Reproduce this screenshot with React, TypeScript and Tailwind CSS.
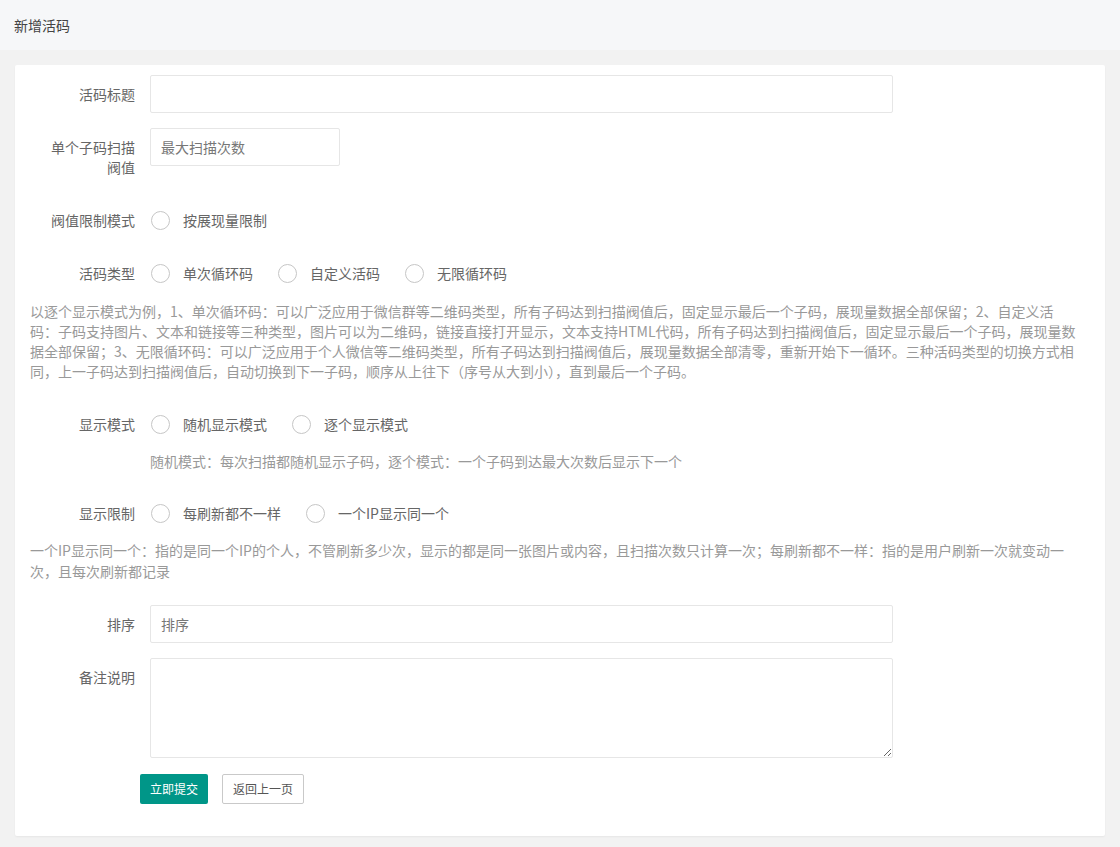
import type { ReactNode } from 'react'

const font = { fontFamily: '"Noto Sans CJK SC", "Noto Sans", sans-serif' }

function Label({ children }: { children: ReactNode }) {
  return (
    <label className="block w-[120px] shrink-0 px-[15px] py-[9px] text-right text-[14px] leading-[20px] text-[#666]">
      {children}
    </label>
  )
}

function Radio({ label }: { label: string }) {
  return (
    <div className="mr-[25px] flex items-center">
      <span className="h-[19px] w-[19px] rounded-full border-[1.5px] border-[#c6c6c6] bg-white" />
      <span className="ml-[13px] text-[14px] leading-[20px] text-[#666]">{label}</span>
    </div>
  )
}

function RadioRow({ label, options }: { label: string; options: string[] }) {
  return (
    <div className="flex">
      <Label>{label}</Label>
      <div className="flex h-[38px] items-center pl-[1px]">
        {options.map((o) => (
          <Radio key={o} label={o} />
        ))}
      </div>
    </div>
  )
}

export default function App() {
  return (
    <div className="min-h-[847px] bg-[#f2f2f2]" style={font}>
      <header className="flex h-[50px] items-center bg-[#f6f7f9] px-[14px] text-[14px] text-[#444]">新增活码</header>

      <div className="mx-[15px] mt-[15px] rounded-[2px] bg-white px-[15px] pb-[32px] pt-[10px] shadow-[0_1px_2px_0_rgba(0,0,0,0.05)]">
        <div className="flex">
          <Label>活码标题</Label>
          <input className="h-[38px] w-[743px] rounded-[2px] border border-[#e6e6e6] px-[10px] text-[14px] outline-none" />
        </div>

        <div className="mt-[15px] flex">
          <Label>单个子码扫描阀值</Label>
          <input
            placeholder="最大扫描次数"
            className="h-[38px] w-[190px] rounded-[2px] border border-[#e6e6e6] px-[10px] text-[14px] outline-none placeholder:text-[#777]"
          />
        </div>

        <div className="mt-[15px]">
          <RadioRow label="阀值限制模式" options={['按展现量限制']} />
        </div>

        <div className="mt-[15px]">
          <RadioRow label="活码类型" options={['单次循环码', '自定义活码', '无限循环码']} />
        </div>

        <p className="max-w-[1050px] py-[9px] text-[14px] leading-[20px] text-[#999]">
          以逐个显示模式为例，1、单次循环码：可以广泛应用于微信群等二维码类型，所有子码达到扫描阀值后，固定显示最后一个子码，展现量数据全部保留；2、自定义活码：子码支持图片、文本和链接等三种类型，图片可以为二维码，链接直接打开显示，文本支持HTML代码，所有子码达到扫描阀值后，固定显示最后一个子码，展现量数据全部保留；3、无限循环码：可以广泛应用于个人微信等二维码类型，所有子码达到扫描阀值后，展现量数据全部清零，重新开始下一循环。三种活码类型的切换方式相同，上一子码达到扫描阀值后，自动切换到下一子码，顺序从上往下（序号从大到小），直到最后一个子码。
        </p>

        <div className="mt-[15px]">
          <RadioRow label="显示模式" options={['随机显示模式', '逐个显示模式']} />
        </div>
        <div className="ml-[120px] py-[8px] text-[14px] leading-[20px] text-[#999]">
          随机模式：每次扫描都随机显示子码，逐个模式：一个子码到达最大次数后显示下一个
        </div>

        <div className="mt-[15px]">
          <RadioRow label="显示限制" options={['每刷新都不一样', '一个IP显示同一个']} />
        </div>

        <p className="py-[8px] text-[14px] leading-[21px] text-[#999]">
          一个IP显示同一个：指的是同一个IP的个人，不管刷新多少次，显示的都是同一张图片或内容，且扫描次数只计算一次；每刷新都不一样：指的是用户刷新一次就变动一次，且每次刷新都记录
        </p>

        <div className="mt-[15px] flex">
          <Label>排序</Label>
          <input
            placeholder="排序"
            className="h-[38px] w-[743px] rounded-[2px] border border-[#e6e6e6] px-[10px] text-[14px] outline-none placeholder:text-[#777]"
          />
        </div>

        <div className="mt-[15px] flex">
          <Label>备注说明</Label>
          <textarea className="block h-[100px] w-[743px] rounded-[2px] border border-[#e6e6e6] px-[10px] py-[6px] text-[14px] outline-none" />
        </div>

        <div className="ml-[110px] mt-[16px] flex gap-[14px]">
          <button className="h-[30px] rounded-[2px] bg-[#009688] px-[10px] text-[12px] text-white">立即提交</button>
          <button className="h-[30px] rounded-[2px] border border-[#c9c9c9] bg-white px-[10px] text-[12px] text-[#555]">
            返回上一页
          </button>
        </div>
      </div>
    </div>
  )
}
